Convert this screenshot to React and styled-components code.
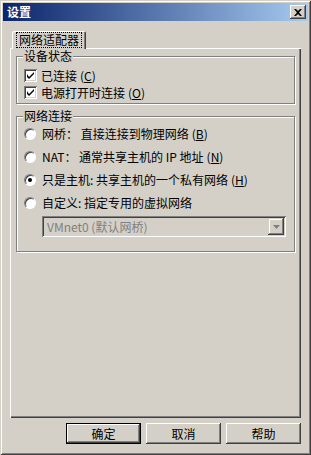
import React from "react";
import styled, { createGlobalStyle } from "styled-components";

const Global = createGlobalStyle`
  html, body { margin: 0; padding: 0; background: #d4d0c8; }
  body { font-family: "Noto Sans CJK SC", "Noto Sans", sans-serif; font-size: 12px; color: #000; }
  * { box-sizing: border-box; }
`;

const Window = styled.div`
  width: 311px;
  height: 455px;
  padding: 3px;
  display: flex;
  flex-direction: column;
  background: #d4d0c8;
  box-shadow: inset 1px 1px #d4d0c8, inset -1px -1px #404040, inset 2px 2px #fff, inset -2px -2px #808080;
`;

const TitleBar = styled.div`
  height: 18px;
  display: flex;
  align-items: center;
  justify-content: space-between;
  padding: 0 2px 0 4px;
  background: linear-gradient(to right, #0a246a, #a6caf0);
  color: #fff;
  font-weight: bold;
  font-size: 12px;
  line-height: 14px;
`;

const CloseButton = styled.div`
  width: 16px;
  height: 14px;
  display: flex;
  align-items: center;
  justify-content: center;
  background: #d4d0c8;
  box-shadow: inset -1px -1px #404040, inset 1px 1px #fff, inset -2px -2px #808080;
`;

const Body = styled.div`
  flex: 1;
  display: flex;
  flex-direction: column;
  padding: 10px 7px 0;
`;

const TabStrip = styled.div`
  display: flex;
  height: 17px;
  padding-left: 2px;
  position: relative;
  z-index: 1;
`;

const Tab = styled.div`
  width: 74px;
  height: 18px;
  margin-bottom: -1px;
  display: flex;
  align-items: center;
  justify-content: center;
  background: #d4d0c8;
  border-top-left-radius: 2px;
  border-top-right-radius: 2px;
  box-shadow: inset 1px 1px #fff, inset -1px 0 #404040, inset -2px 0 #808080;
`;

const FocusText = styled.span`
  display: block;
  outline: 1px dotted #000;
  outline-offset: 0;
  padding: 0 2px;
  line-height: 14px;
  height: 14px;
`;

const Panel = styled.div`
  flex: 1;
  display: flex;
  flex-direction: column;
  gap: 12px;
  padding: 8px 6px 0 6px;
  box-shadow: inset 1px 1px #fff, inset -1px -1px #404040, inset -2px -2px #808080;
`;

const Group = styled.div`
  position: relative;
  border: 1px solid #808080;
  box-shadow: inset 1px 1px #fff, 1px 1px #fff;
  padding: ${(p) => p.$pad};
  display: flex;
  flex-direction: column;
`;

const Caption = styled.span`
  position: absolute;
  top: -8px;
  left: 6px;
  padding: 0 1px;
  height: 14px;
  background: #d4d0c8;
  line-height: 14px;
`;

const Row = styled.div`
  display: flex;
  align-items: center;
  height: ${(p) => p.$h}px;
  gap: ${(p) => p.$gap}px;
`;

const Label = styled.span`
  display: block;
  height: 14px;
  line-height: 14px;
  white-space: pre;
`;

const Mnemonic = styled.span`
  margin-left: 3px;
`;

const CheckBox = styled.span`
  width: 13px;
  height: 13px;
  flex: none;
  background: #fff;
  display: flex;
  align-items: center;
  justify-content: center;
  box-shadow: inset 1px 1px #808080, inset -1px -1px #fff, inset 2px 2px #404040, inset -2px -2px #d4d0c8;
`;

const Radio = styled.span`
  width: 12px;
  height: 12px;
  flex: none;
  border-radius: 50%;
  background: #fff;
  border: 1px solid;
  border-color: #808080 #fff #fff #808080;
  box-shadow: inset 1px 1px #404040;
  display: flex;
  align-items: center;
  justify-content: center;
  &::after {
    content: "";
    display: ${(p) => (p.$checked ? "block" : "none")};
    width: 4px;
    height: 4px;
    border-radius: 50%;
    background: #000;
  }
`;

const Combo = styled.div`
  height: 21px;
  margin: 2px 1px 0 18px;
  display: flex;
  align-items: center;
  justify-content: space-between;
  padding: 2px 2px 2px 5px;
  color: #808080;
  background: #d4d0c8;
  box-shadow: inset 1px 1px #808080, inset -1px -1px #fff, inset 2px 2px #404040, inset -2px -2px #d4d0c8;
`;

const ArrowButton = styled.div`
  width: 16px;
  height: 17px;
  display: flex;
  align-items: center;
  justify-content: center;
  background: #d4d0c8;
  box-shadow: inset -1px -1px #404040, inset 1px 1px #d4d0c8, inset -2px -2px #808080, inset 2px 2px #fff;
`;

const ButtonRow = styled.div`
  display: flex;
  justify-content: flex-end;
  gap: 5px;
  margin: 5px 0 8px;
`;

const Button = styled.div`
  width: 75px;
  height: 21px;
  display: flex;
  align-items: center;
  justify-content: center;
  line-height: 14px;
  background: #d4d0c8;
  box-shadow: ${(p) =>
    p.$default
      ? "inset 0 0 0 1px #000, inset -2px -2px #404040, inset 2px 2px #fff, inset -3px -3px #808080"
      : "inset -1px -1px #404040, inset 1px 1px #fff, inset -2px -2px #808080"};
`;

const Check = () => (
  <svg width="7" height="7" viewBox="0 0 7 7">
    <path d="M0 2v3l2 2l5-5v-2l-5 5z" fill="#000" />
  </svg>
);

export default function App() {
  return (
    <>
      <Global />
      <Window>
        <TitleBar>
          <span>设置</span>
          <CloseButton>
            <svg width="8" height="7" viewBox="0 0 8 7">
              <path d="M0 0h2l2 2l2-2h2l-3 3.5l3 3.5h-2l-2-2l-2 2h-2l3-3.5z" fill="#000" />
            </svg>
          </CloseButton>
        </TitleBar>
        <Body>
          <TabStrip>
            <Tab>
              <FocusText>网络适配器</FocusText>
            </Tab>
          </TabStrip>
          <Panel>
            <Group $pad="10px 7px 2px">
              <Caption>设备状态</Caption>
              <Row $h={17} $gap={4}>
                <CheckBox><Check /></CheckBox>
                <Label>已连接<Mnemonic>(<u>C</u>)</Mnemonic></Label>
              </Row>
              <Row $h={17} $gap={4}>
                <CheckBox><Check /></CheckBox>
                <Label>电源打开时连接<Mnemonic>(<u>O</u>)</Mnemonic></Label>
              </Row>
            </Group>
            <Group $pad="5px 7px 14px">
              <Caption>网络连接</Caption>
              <Row $h={23} $gap={6}>
                <Radio />
                <Label>网桥： 直接连接到物理网络<Mnemonic>(<u>B</u>)</Mnemonic></Label>
              </Row>
              <Row $h={23} $gap={6}>
                <Radio />
                <Label>NAT： 通常共享主机的 IP 地址<Mnemonic>(<u>N</u>)</Mnemonic></Label>
              </Row>
              <Row $h={23} $gap={6}>
                <Radio $checked />
                <Label>只是主机: 共享主机的一个私有网络<Mnemonic>(<u>H</u>)</Mnemonic></Label>
              </Row>
              <Row $h={23} $gap={6}>
                <Radio />
                <Label>自定义: 指定专用的虚拟网络</Label>
              </Row>
              <Combo>
                <Label>VMnet0 (默认网桥)</Label>
                <ArrowButton>
                  <svg width="7" height="4" viewBox="0 0 7 4">
                    <path d="M0 0h7l-3.5 4z" fill="#808080" />
                  </svg>
                </ArrowButton>
              </Combo>
            </Group>
          </Panel>
          <ButtonRow>
            <Button $default>确定</Button>
            <Button>取消</Button>
            <Button>帮助</Button>
          </ButtonRow>
        </Body>
      </Window>
    </>
  );
}
